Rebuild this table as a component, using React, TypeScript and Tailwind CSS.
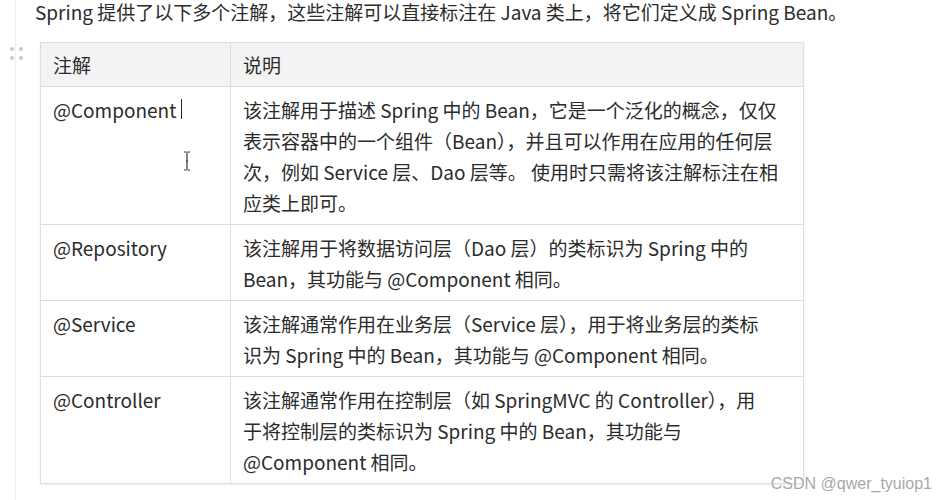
import React from 'react';

const rows = [
  {
    name: '@Component',
    lines: [
      '该注解用于描述 Spring 中的 Bean，它是一个泛化的概念，仅仅',
      '表示容器中的一个组件（Bean），并且可以作用在应用的任何层',
      '次，例如 Service 层、Dao 层等。 使用时只需将该注解标注在相',
      '应类上即可。',
    ],
  },
  {
    name: '@Repository',
    lines: ['该注解用于将数据访问层（Dao 层）的类标识为 Spring 中的', 'Bean，其功能与 @Component 相同。'],
  },
  {
    name: '@Service',
    lines: ['该注解通常作用在业务层（Service 层），用于将业务层的类标', '识为 Spring 中的 Bean，其功能与 @Component 相同。'],
  },
  {
    name: '@Controller',
    lines: [
      '该注解通常作用在控制层（如 SpringMVC 的 Controller），用',
      '于将控制层的类标识为 Spring 中的 Bean，其功能与',
      '@Component 相同。',
    ],
  },
];

const font = { fontFamily: '"Noto Sans CJK SC", "Noto Sans", sans-serif' };

export default function App() {
  return (
    <div className="relative h-[500px] w-[939px] overflow-hidden bg-white text-[19px] leading-[31px] text-[#2b2b2b]" style={font}>
      {/* left gutter line */}
      <div className="absolute left-[15px] top-0 h-full w-px bg-[#ececec]" />

      <p className="pl-[35px] leading-[24px] whitespace-nowrap">
        Spring 提供了以下多个注解，这些注解可以直接标注在 Java 类上，将它们定义成 Spring Bean。
      </p>

      <div className="relative ml-[40px] mt-[18px] w-[764px]">
        {/* drag handle */}
        <div className="absolute left-[-30px] top-[5px] grid grid-cols-2 gap-x-[5px] gap-y-[5px]">
          <span className="h-[4px] w-[4px] rounded-full bg-[#c8c8c8]" />
          <span className="h-[4px] w-[4px] rounded-full bg-[#c8c8c8]" />
          <span className="h-[4px] w-[4px] rounded-full bg-[#c8c8c8]" />
          <span className="h-[4px] w-[4px] rounded-full bg-[#c8c8c8]" />
        </div>

        <table className="w-full border-collapse shadow-[0_1px_2px_rgba(0,0,0,0.08)]">
          <thead>
            <tr className="bg-[#f3f3f3]">
              <th className="w-[190px] border border-[#dedede] px-[12px] py-[6px] text-left font-normal">注解</th>
              <th className="border border-[#dedede] px-[12px] py-[6px] text-left font-normal">说明</th>
            </tr>
          </thead>
          <tbody>
            {rows.map((r, i) => (
              <tr key={r.name}>
                <td className="relative border border-[#dedede] px-[12px] pt-[7px] pb-[6px] align-top whitespace-nowrap">
                  {r.name}
                  {i === 0 && (
                    <>
                      <span className="absolute left-[140px] top-[12px] h-[20px] w-px bg-[#222]" />
                      <svg className="absolute left-[142px] top-[64px]" width="8" height="20" viewBox="0 0 8 20">
                        <path d="M1 1h2.5M4.5 1h2.5M4 1.5v17M1 19h2.5M4.5 19h2.5M3 10h2" stroke="#333" strokeWidth="1.2" fill="none" />
                      </svg>
                    </>
                  )}
                </td>
                <td className="border border-[#dedede] px-[12px] pt-[7px] pb-[6px] align-top whitespace-nowrap">
                  {r.lines.map((l) => (
                    <div key={l}>{l}</div>
                  ))}
                </td>
              </tr>
            ))}
          </tbody>
        </table>
      </div>

      <div
        className="absolute right-[7px] top-[474px] text-[16px] leading-[20px] text-[#a8a8a8]"
        style={{ fontFamily: '"Liberation Sans", Arial, sans-serif', textShadow: '0 0 2px #fff' }}
      >
        CSDN @qwer_tyuiop1
      </div>
    </div>
  );
}
